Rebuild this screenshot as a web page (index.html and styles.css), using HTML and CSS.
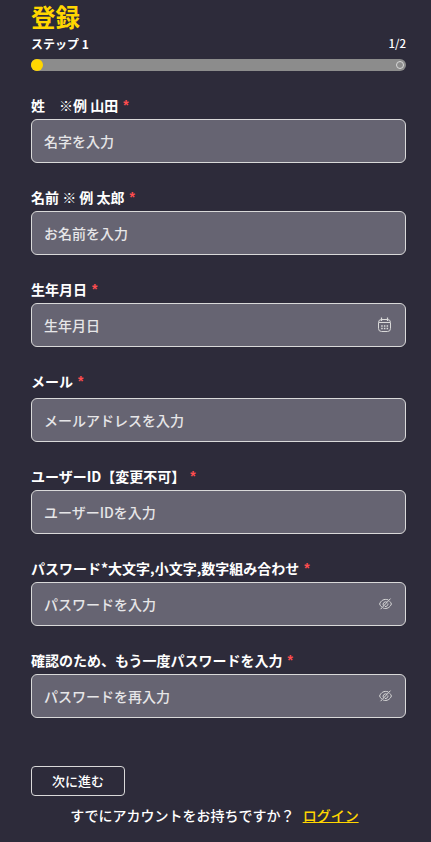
FILE: index.html
```html
<!DOCTYPE html>
<html lang="ja">
<head>
  <meta charset="UTF-8" />
  <meta name="viewport" content="width=device-width, initial-scale=1.0"/>
  <title>登録</title>
  <link rel="stylesheet" href="styles.css">
</head>
<body>

  <main class="register">
    <h1>登録</h1>
    <div class="step-info">
      <span class="step-name">ステップ 1</span>
      <span class="step-count">1/2</span>
    </div>
    <div class="progress">
      <span class="dot active"></span>
      <span class="dot"></span>
    </div>

    <form>
      <div class="field">
        <label for="lastName">姓　※例 山田<span class="required">*</span></label>
        <div class="input-box">
          <input type="text" id="lastName" placeholder="名字を入力" />
        </div>
      </div>

      <div class="field">
        <label for="firstName">名前 ※ 例 太郎<span class="required">*</span></label>
        <div class="input-box">
          <input type="text" id="firstName" placeholder="お名前を入力" />
        </div>
      </div>

      <div class="field">
        <label for="birthday">生年月日<span class="required">*</span></label>
        <div class="input-box">
          <input type="text" id="birthday" placeholder="生年月日" />
          <svg class="icon-calendar" viewBox="0 0 16 16" fill="none" stroke="currentColor">
            <rect x="1.5" y="2.5" width="12" height="12" rx="3"/>
            <path d="M2 5.5h11M4.5 .5v3.5M10.5 .5v3.5" stroke-width="1.2"/>
            <path d="M4.2 9h1.5M6.9 9h1.5M9.6 9h1.5M4.2 11.5h1.5M6.9 11.5h1.5M9.6 11.5h1.5" stroke-width="1.3"/>
          </svg>
        </div>
      </div>

      <div class="field field-mail">
        <label for="email">メール<span class="required">*</span></label>
        <div class="input-box">
          <input type="email" id="email" placeholder="メールアドレスを入力" />
        </div>
      </div>

      <div class="field">
        <label for="userId">ユーザーID【変更不可】<span class="required">*</span></label>
        <div class="input-box">
          <input type="text" id="userId" placeholder="ユーザーIDを入力" />
        </div>
      </div>

      <div class="field">
        <label for="password">パスワード*大文字,小文字,数字組み合わせ<span class="required">*</span></label>
        <div class="input-box">
          <input type="password" id="password" placeholder="パスワードを入力" />
          <svg class="icon-eye" viewBox="0 0 14 14" fill="none" stroke="currentColor">
            <path d="M9.3 2.9C5 1.4 1.8 3.6 .6 7c.5 1.3 1.2 2.2 2.1 2.9M4.2 11.1c3.8 1.3 7 -.9 8.2-4.1-.4-1.2-1-2-1.8-2.7M11.5 1.6 1.6 12.2"/>
            <path d="M8 5.2a2.6 2.6 0 0 0-3.6 3.5M8.9 6.5a2.6 2.6 0 0 1-3 3"/>
          </svg>
        </div>
      </div>

      <div class="field">
        <label for="confirm">確認のため、もう一度パスワードを入力<span class="required">*</span></label>
        <div class="input-box">
          <input type="password" id="confirm" placeholder="パスワードを再入力" />
          <svg class="icon-eye" viewBox="0 0 14 14" fill="none" stroke="currentColor">
            <path d="M9.3 2.9C5 1.4 1.8 3.6 .6 7c.5 1.3 1.2 2.2 2.1 2.9M4.2 11.1c3.8 1.3 7 -.9 8.2-4.1-.4-1.2-1-2-1.8-2.7M11.5 1.6 1.6 12.2"/>
            <path d="M8 5.2a2.6 2.6 0 0 0-3.6 3.5M8.9 6.5a2.6 2.6 0 0 1-3 3"/>
          </svg>
        </div>
      </div>

      <button type="button" class="next-btn">次に進む</button>
    </form>

    <p class="login">すでにアカウントをお持ちですか？ <a href="#">ログイン</a></p>
  </main>

</body>
</html>
```
FILE: styles.css
```css
:root {
  --bg: #2d2b3a;
  --input-bg: #666472;
  --border: #d9d9d9;
  --text: #fff;
  --placeholder: #e6e6e8;
  --primary: #ffd600;
  --danger: #ff4d4f;
}
* { box-sizing: border-box; }
body {
  margin: 0;
  background: var(--bg);
  color: var(--text);
  font-family: "Noto Sans CJK JP", sans-serif;
  font-size: 14px;
  line-height: 22px;
}
.register {
  height: 842px;
  padding: 0 25px 0 31px;
  overflow: hidden;
}
h1 {
  margin: 0;
  color: var(--primary);
  font-size: 24.5px;
  font-weight: bold;
  line-height: 34px;
}
.step-info {
  display: flex;
  justify-content: space-between;
  font-size: 12px;
  line-height: 19px;
}
.step-name {
  font-weight: bold;
}
.step-count {
  font-size: 11.5px;
  font-weight: 500;
}
.progress {
  display: flex;
  align-items: center;
  justify-content: space-between;
  height: 12px;
  margin: 6px 0 23px;
  border-radius: 6px;
  background: #8c8c8c;
}
.dot {
  width: 8px;
  height: 8px;
  margin-right: 2px;
  border: 1px solid var(--border);
  border-radius: 50%;
}
.dot.active {
  width: 12px;
  height: 12px;
  border: none;
  background: var(--primary);
}
.field {
  margin-bottom: 23px;
}
label {
  display: block;
  height: 22px;
  margin-bottom: 3px;
  font-weight: bold;
  white-space: nowrap;
}
.field-mail label {
  margin-bottom: 6px;
}
.required {
  margin-left: 3.5px;
  color: var(--danger);
  font-family: "Liberation Mono", monospace;
}
.input-box {
  display: flex;
  align-items: center;
  height: 44px;
  padding: 0 12px;
  border: 1px solid var(--border);
  border-radius: 6px;
  background: var(--input-bg);
  color: var(--border);
}
input {
  flex: 1;
  min-width: 0;
  padding: 0;
  border: none;
  outline: none;
  background: none;
  color: var(--text);
  font: inherit;
}
input::placeholder {
  color: var(--placeholder);
  font-weight: 500;
  opacity: 1;
}
.icon-calendar {
  width: 16px;
  height: 16px;
}
.icon-eye {
  width: 14px;
  height: 14px;
}
.next-btn {
  display: block;
  height: 30px;
  margin-top: 48px;
  padding: 0 20px 2px;
  border: 1px solid var(--border);
  border-radius: 4px;
  background: none;
  color: var(--text);
  font: 500 13px "Noto Sans CJK JP", sans-serif;
  cursor: pointer;
}
.login {
  margin: 8px 0 0;
  padding-right: 8px;
  font-weight: 500;
  text-align: center;
}
.login a {
  margin-left: 5px;
  color: var(--primary);
}
```
